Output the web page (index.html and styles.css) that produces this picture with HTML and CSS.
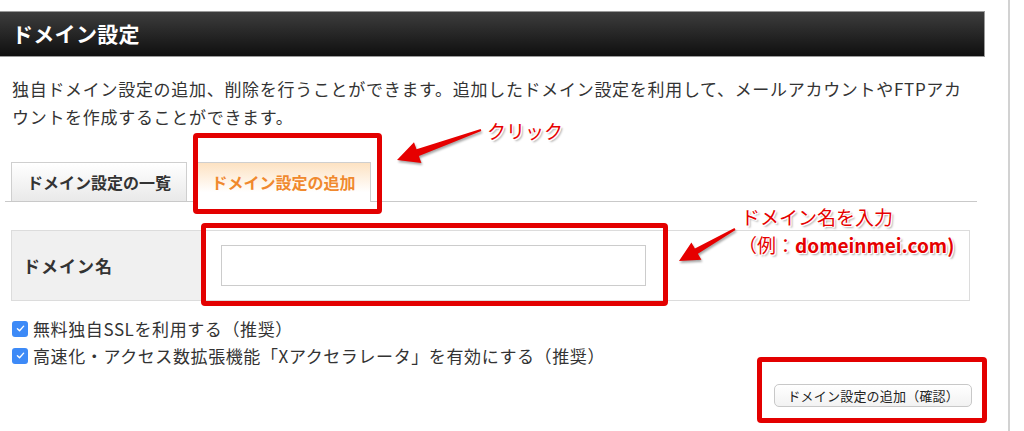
FILE: index.html
```html
<!DOCTYPE html>
<html lang="ja">
<head>
<meta charset="utf-8">
<title>ドメイン設定</title>
<link rel="stylesheet" href="styles.css">
</head>
<body>
<div class="page">
  <div class="main">
    <h1 class="title">ドメイン設定</h1>
    <p class="desc">独自ドメイン設定の追加、削除を行うことができます。追加したドメイン設定を利用して、メールアカウントやFTPアカ<br>ウントを作成することができます。</p>
    <div class="tabs">
      <div class="tab">ドメイン設定の一覧</div>
      <div class="tab active">ドメイン設定の追加</div>
    </div>
    <div class="form-row">
      <div class="label">ドメイン名</div>
      <div class="field"><input class="input" type="text"></div>
    </div>
    <div class="checks">
      <label class="check"><span class="box"><svg viewBox="0 0 16 16" width="11" height="11"><path d="M3.5 8.3 L6.6 11.3 L12.6 4.6" fill="none" stroke="#fff" stroke-width="2" stroke-linecap="round" stroke-linejoin="round"/></svg></span>無料独自SSLを利用する（推奨）</label>
      <label class="check"><span class="box"><svg viewBox="0 0 16 16" width="11" height="11"><path d="M3.5 8.3 L6.6 11.3 L12.6 4.6" fill="none" stroke="#fff" stroke-width="2" stroke-linecap="round" stroke-linejoin="round"/></svg></span>高速化・アクセス数拡張機能「Xアクセラレータ」を有効にする（推奨）</label>
    </div>
    <div class="actions">
      <button class="btn" type="button">ドメイン設定の追加（確認）</button>
    </div>
  </div>

  <div class="mark mark-tab"></div>
  <div class="mark mark-input"></div>
  <div class="mark mark-btn"></div>

  <svg class="arrows" width="1024" height="431" viewBox="0 0 1024 431">
    <polygon points="397,160 421.4,163 418.9,155.9 481.3,130.9 480.7,129.1 416.5,149.3 414,142.2" fill="#e60000"/>
    <polygon points="679,261 701.4,259.8 697.9,253.7 735.5,229.9 734.5,228.1 694.9,248.5 691.4,242.4" fill="#e60000"/>
  </svg>

  <div class="note note-click">クリック</div>
  <div class="note note-domain">ドメイン名を入力</div>
  <div class="note note-example">（例：<b>domeinmei.com)</b></div>
</div>
</body>
</html>
```

FILE: styles.css
```css
* { box-sizing: border-box; }

body {
  margin: 0;
  background: #fff;
  font-family: "Noto Sans CJK JP", "Noto Sans", sans-serif;
  color: #333;
}

.page {
  position: relative;
  width: 1024px;
  height: 431px;
  overflow: hidden;
}

.main {
  width: 1010px;
  height: 431px;
  border-right: 2px solid #d2d2d2;
  padding-top: 11px;
}

.title {
  margin: 0;
  width: 985px;
  height: 46px;
  padding-left: 12px;
  background: linear-gradient(#3d3d3d, #0f0f0f);
  border: 1px solid #9a9a9a;
  border-left: none;
  color: #fff;
  font-size: 21px;
  font-weight: bold;
  line-height: 43px;
  letter-spacing: 0.3px;
}

.desc {
  margin: 18px 0 0;
  padding-left: 12px;
  font-size: 17px;
  line-height: 28px;
  letter-spacing: 0.7px;
  color: #333;
}

.tabs {
  display: flex;
  align-items: flex-end;
  gap: 9px;
  width: 972px;
  height: 40px;
  margin: 31px 0 0 5px;
  padding-left: 6px;
  border-bottom: 1px solid #c9c9c9;
}

.tab {
  display: flex;
  align-items: center;
  justify-content: center;
  width: 176px;
  height: 39px;
  border: 1px solid #cfcfcf;
  border-bottom: none;
  background: linear-gradient(#ffffff, #e9e9e9);
  font-size: 16px;
  font-weight: bold;
  color: #333;
}

.tab.active {
  width: 175px;
  height: 40px;
  margin-bottom: -1px;
  padding-bottom: 1px;
  background: linear-gradient(#fde2c2, #ffffff 75%);
  color: #f0892e;
}

.form-row {
  display: flex;
  width: 959px;
  height: 71px;
  margin: 28px 0 0 11px;
  border: 1px solid #dcdcdc;
}

.label {
  display: flex;
  align-items: center;
  width: 190px;
  padding-left: 11px;
  background: #f0f0f0;
  border-right: 1px solid #dcdcdc;
  font-size: 17px;
  font-weight: bold;
  letter-spacing: 1px;
  color: #333;
}

.field {
  display: flex;
  align-items: center;
  padding-left: 19px;
}

.input {
  width: 425px;
  height: 41px;
  border: 1px solid #cccccc;
  background: #fff;
  margin: 0;
}

.checks {
  display: flex;
  flex-direction: column;
  margin-top: 14px;
  padding-left: 12px;
}

.check {
  display: flex;
  align-items: center;
  gap: 5px;
  height: 27px;
  font-size: 17px;
  letter-spacing: 0.6px;
  color: #333;
}

.box {
  display: flex;
  align-items: center;
  justify-content: center;
  width: 16px;
  height: 16px;
  border-radius: 3px;
  background: #3d8af7;
}

.actions {
  display: flex;
  justify-content: flex-end;
  width: 972px;
  margin-top: 15px;
}

.btn {
  height: 23px;
  padding: 0 12px;
  border: 1px solid #c8c8c8;
  border-radius: 5px;
  background: linear-gradient(#ffffff, #f2f2f2);
  font-family: "Noto Sans CJK JP", sans-serif;
  font-size: 13px;
  line-height: 20px;
  letter-spacing: 0.2px;
  color: #222;
}

.mark {
  position: absolute;
  border: 5px solid #e30000;
  border-radius: 4px;
}

.mark-tab { left: 193px; top: 133px; width: 189px; height: 81px; }
.mark-input { left: 201px; top: 223px; width: 467px; height: 83px; }
.mark-btn { left: 757px; top: 357px; width: 230px; height: 66px; }

.arrows {
  position: absolute;
  left: 0;
  top: 0;
  filter: drop-shadow(1px 2px 1px rgba(0, 0, 0, 0.35));
}

.note {
  position: absolute;
  font-size: 19px;
  line-height: 24px;
  color: #e60000;
  white-space: nowrap;
  text-shadow: 1px 0 0 #fff, -1px 0 0 #fff, 0 1px 0 #fff, 0 -1px 0 #fff,
    1px 1px 0 #fff, -1px -1px 0 #fff, 2px 2px 2px rgba(0, 0, 0, 0.35);
}

.note b { font-weight: bold; }

.note-click { left: 487px; top: 119px; }
.note-domain { left: 741px; top: 205px; }
.note-example { left: 738px; top: 233px; }
```
